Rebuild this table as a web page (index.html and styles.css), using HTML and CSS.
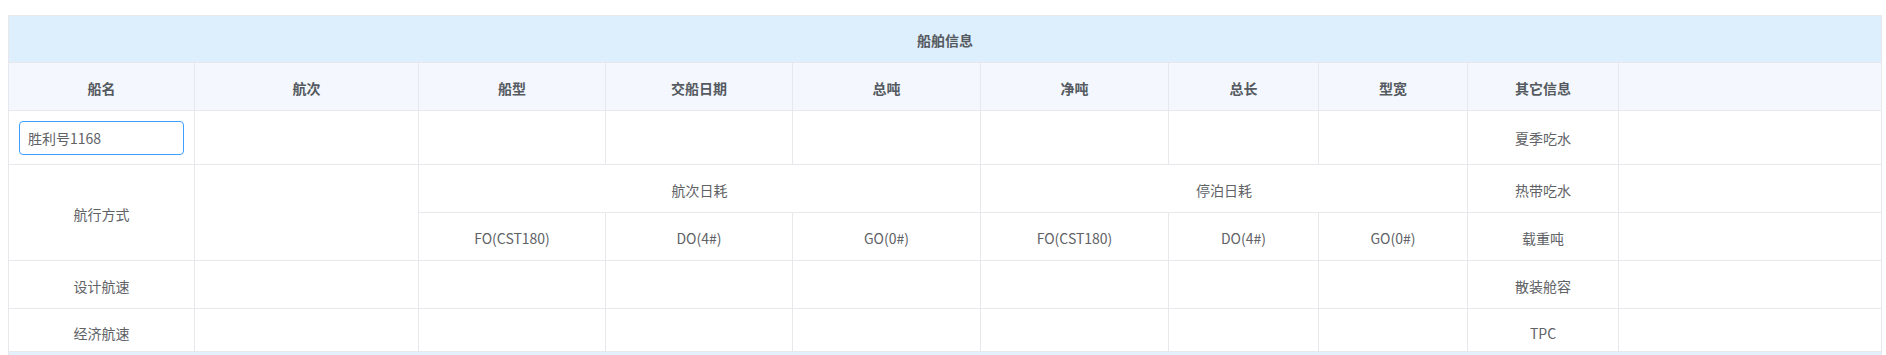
FILE: index.html
```html
<!DOCTYPE html>
<html lang="zh-CN">
<head>
<meta charset="utf-8">
<title>船舶信息</title>
<link rel="stylesheet" href="styles.css">
</head>
<body>
<div class="page">
  <table class="ship">
    <colgroup>
      <col class="c1"><col class="c2"><col class="c3"><col class="c4"><col class="c5">
      <col class="c6"><col class="c7"><col class="c8"><col class="c9"><col class="c10">
    </colgroup>
    <thead>
      <tr class="title-row"><th colspan="10">船舶信息</th></tr>
      <tr class="head-row">
        <th>船名</th><th>航次</th><th>船型</th><th>交船日期</th><th>总吨</th>
        <th>净吨</th><th>总长</th><th>型宽</th><th>其它信息</th><th></th>
      </tr>
    </thead>
    <tbody>
      <tr class="input-row">
        <td><input class="name-input" type="text" value="胜利号1168" autofocus></td>
        <td></td><td></td><td></td><td></td><td></td><td></td><td></td>
        <td>夏季吃水</td><td></td>
      </tr>
      <tr>
        <td rowspan="2">航行方式</td>
        <td rowspan="2"></td>
        <td colspan="3">航次日耗</td>
        <td colspan="3">停泊日耗</td>
        <td>热带吃水</td><td></td>
      </tr>
      <tr>
        <td>FO(CST180)</td><td>DO(4#)</td><td>GO(0#)</td>
        <td>FO(CST180)</td><td>DO(4#)</td><td>GO(0#)</td>
        <td>载重吨</td><td></td>
      </tr>
      <tr>
        <td>设计航速</td>
        <td></td><td></td><td></td><td></td><td></td><td></td><td></td>
        <td>散装舱容</td><td></td>
      </tr>
      <tr class="last-row">
        <td>经济航速</td>
        <td></td><td></td><td></td><td></td><td></td><td></td><td></td>
        <td>TPC</td><td></td>
      </tr>
    </tbody>
  </table>
  <div class="next-section"></div>
</div>
</body>
</html>
```

FILE: styles.css
```css
html, body {
  margin: 0;
  padding: 0;
  background: #ffffff;
}

body {
  font-family: "Noto Sans CJK SC", "Noto Sans", sans-serif;
  font-size: 14px;
  color: #606266;
  overflow: hidden;
}

.page {
  padding: 15px 4px 0 8px;
}

.ship {
  width: 1874px;
  border-collapse: collapse;
  table-layout: fixed;
  border: 1px solid #e6e8eb;
}

.c1 { width: 186px; }
.c2 { width: 224px; }
.c3 { width: 187px; }
.c4 { width: 187px; }
.c5 { width: 188px; }
.c6 { width: 188px; }
.c7 { width: 150px; }
.c8 { width: 149px; }
.c9 { width: 151px; }
.c10 { width: 263px; }

.ship th,
.ship td {
  border: 1px solid #e6e8eb;
  text-align: center;
  vertical-align: middle;
  padding: 0 10px;
  line-height: 20px;
}

.ship th {
  font-weight: bold;
  color: #555a60;
}

.title-row th {
  height: 44px;
  background: #ddeefd;
  padding-top: 2px;
}

.head-row th {
  height: 45px;
  background: #f4f8fe;
  padding-top: 2px;
}

.ship td {
  height: 44px;
  padding-top: 3px;
}

.input-row td {
  height: 34px;
  padding: 10px 10px 9px;
}

.last-row td {
  height: 36px;
  padding-top: 6px;
}

.name-input {
  display: block;
  box-sizing: border-box;
  width: 100%;
  height: 34px;
  margin: 0;
  padding: 0 8px;
  border: 1px solid #409eff;
  border-radius: 4px;
  outline: none;
  font-family: "Noto Sans CJK SC", "Noto Sans", sans-serif;
  font-size: 14px;
  color: #606266;
  background: #fff;
}

.next-section {
  width: 1874px;
  height: 20px;
  box-sizing: border-box;
  background: #e3f0fd;
  border-left: 1px solid #e6e8eb;
  border-right: 1px solid #e6e8eb;
}
```
